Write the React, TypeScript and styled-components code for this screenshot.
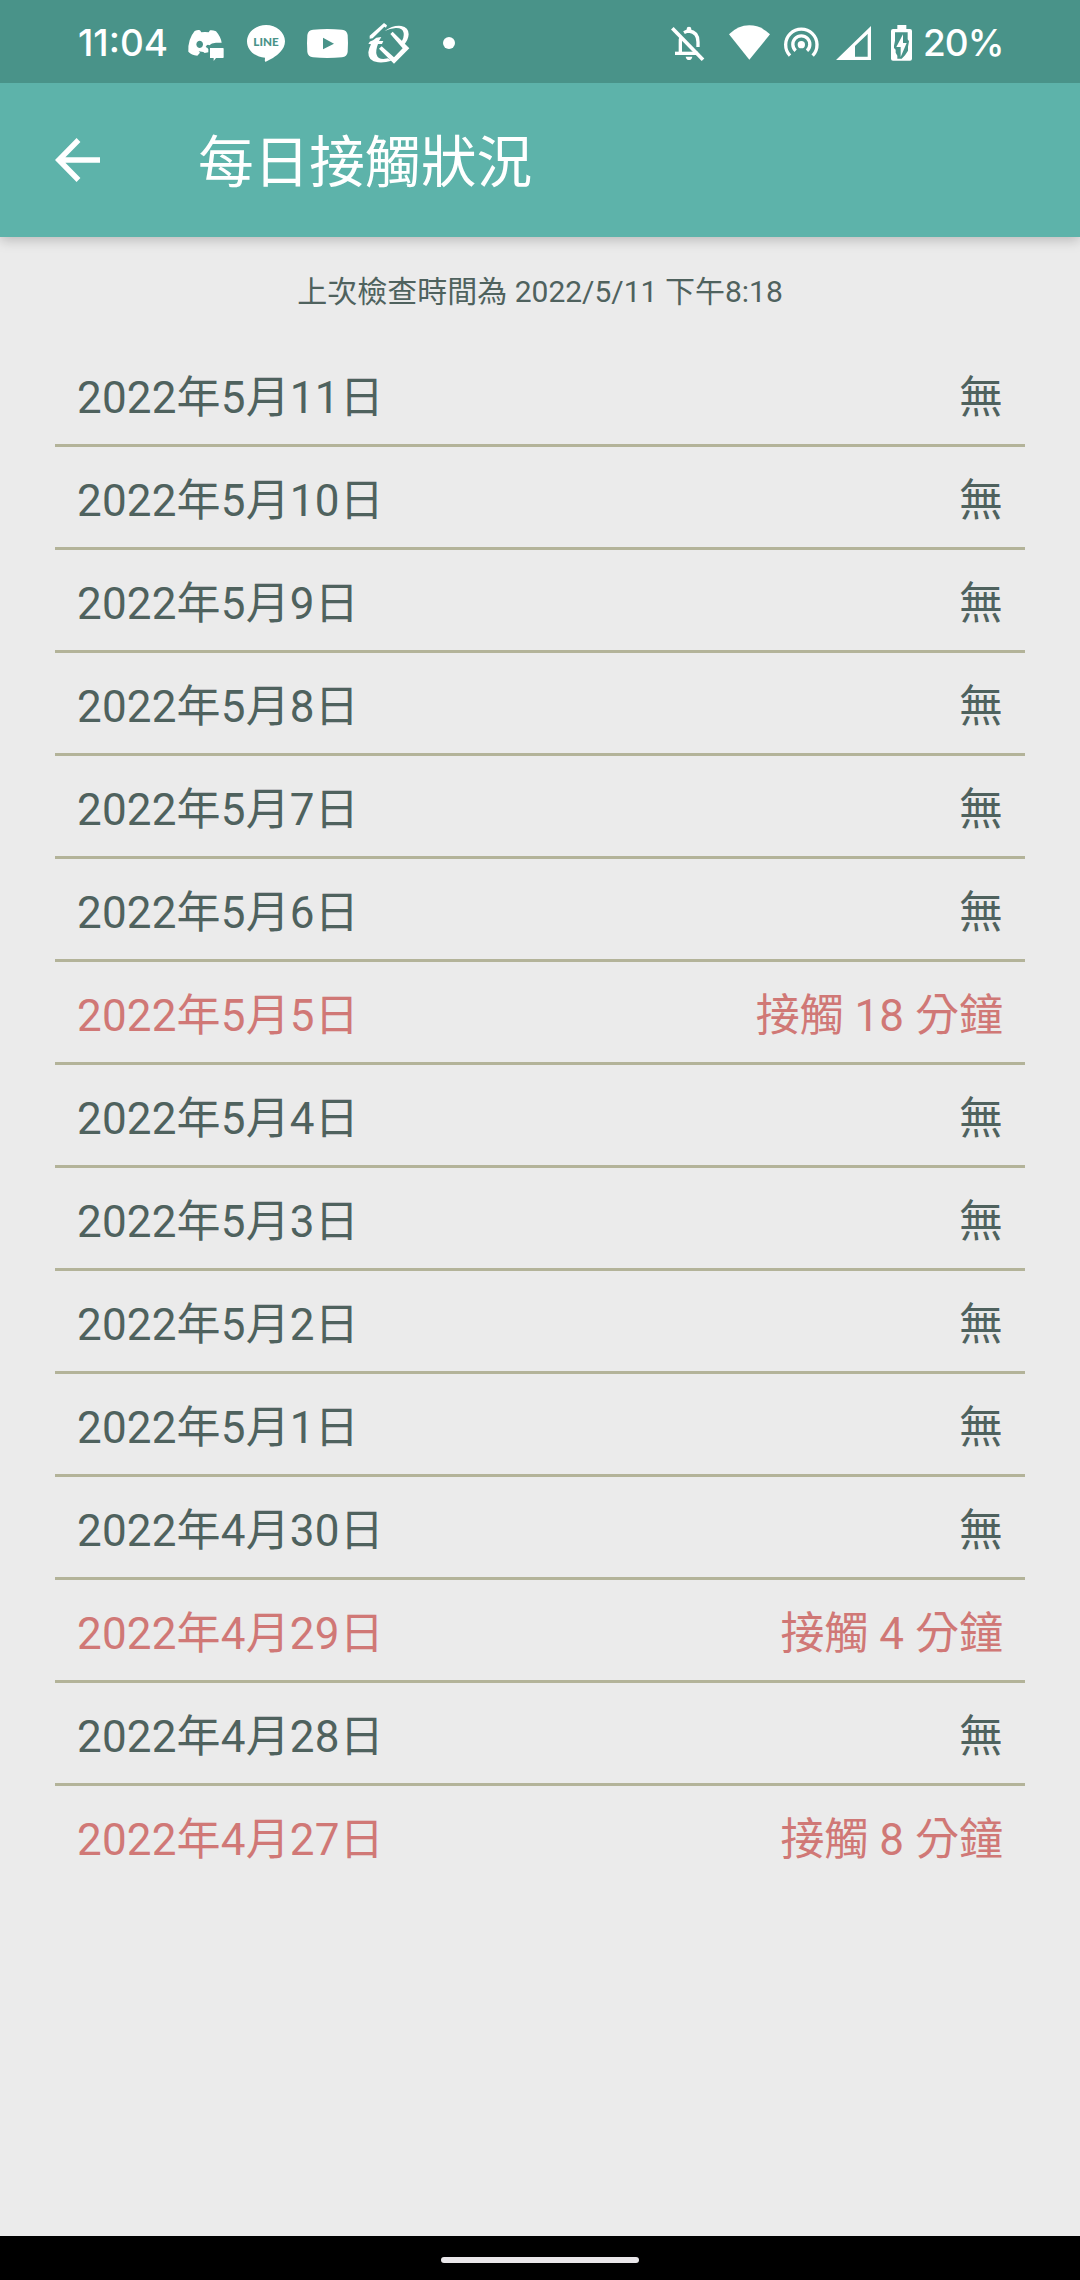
import React from "react";
import styled, { createGlobalStyle } from "styled-components";

const STATUS = "#499389";

const GlobalStyle = createGlobalStyle`
  * { box-sizing: border-box; }
  body { margin: 0; background: #ebebeb; }
`;

const Screen = styled.div`
  display: flex;
  flex-direction: column;
  width: 1080px;
  height: 2280px;
  background: #ebebeb;
  color: #4f625e;
  font-family: Roboto, "Noto Sans CJK TC", sans-serif;
  overflow: hidden;
`;

const StatusBar = styled.div`
  position: relative;
  z-index: 1;
  display: flex;
  justify-content: space-between;
  height: 83px;
  flex: none;
  padding: 0 77px 0 78px;
  background: ${STATUS};
  color: #fff;
`;

const StatusGroup = styled.div`
  display: flex;
  align-items: flex-start;
`;

const StatusText = styled.span<{ $left?: number; $width: number; $spacing?: number }>`
  width: ${(p) => p.$width}px;
  margin-left: ${(p) => p.$left ?? 0}px;
  font-family: Inter, sans-serif;
  font-size: 37px;
  font-weight: 500;
  letter-spacing: ${(p) => p.$spacing ?? 0}px;
  line-height: 46px;
  padding-top: 20px;
  white-space: nowrap;
`;

const Glyph = styled.svg<{ $left: number; $top: number }>`
  display: block;
  flex: none;
  margin-left: ${(p) => p.$left}px;
  margin-top: ${(p) => p.$top}px;
  fill: #fff;
  overflow: visible;
`;

const AppBar = styled.header`
  display: flex;
  align-items: center;
  gap: 98px;
  height: 154px;
  flex: none;
  padding-left: 55px;
  background: #5db3aa;
  color: #fff;
  box-shadow: 0 3px 12px rgba(0, 0, 0, 0.22);
`;

const BackArrow = styled.svg`
  display: block;
  width: 45px;
  height: 44px;
`;

const Title = styled.h1`
  margin: 0;
  padding-top: 6px;
  font-size: 55.7px;
  font-weight: 400;
  line-height: 80px;
`;

const LastCheck = styled.p`
  margin: 0;
  height: 107px;
  padding-top: 33px;
  font-size: 30px;
  line-height: 44px;
  text-align: center;
`;

const List = styled.ul`
  flex: 1;
  margin: 0;
  padding: 0 55px;
  list-style: none;
`;

const Row = styled.li<{ $alert: boolean }>`
  display: flex;
  align-items: center;
  justify-content: space-between;
  height: 103px;
  padding: 8px 22px 0;
  border-bottom: 3px solid #b3b399;
  font-size: 44px;
  line-height: 64px;
  color: ${(p) => (p.$alert ? "#d07876" : "inherit")};

  &:last-child {
    border-bottom-color: transparent;
  }
`;

const Day = styled.span`
  letter-spacing: 0.17px;
`;

const NavBar = styled.div`
  display: flex;
  align-items: center;
  justify-content: center;
  height: 44px;
  padding-top: 4px;
  flex: none;
  background: #000;
`;

const NavHandle = styled.div`
  width: 198px;
  height: 6px;
  border-radius: 3px;
  background: #e9e7ea;
`;

const days: [string, number][] = [
  ["2022年5月11日", 0],
  ["2022年5月10日", 0],
  ["2022年5月9日", 0],
  ["2022年5月8日", 0],
  ["2022年5月7日", 0],
  ["2022年5月6日", 0],
  ["2022年5月5日", 18],
  ["2022年5月4日", 0],
  ["2022年5月3日", 0],
  ["2022年5月2日", 0],
  ["2022年5月1日", 0],
  ["2022年4月30日", 0],
  ["2022年4月29日", 4],
  ["2022年4月28日", 0],
  ["2022年4月27日", 8],
];

// Every glyph is drawn on a grid of three units to the pixel.
const DiscordIcon = () => (
  <Glyph $left={20} $top={30} width="36" height="31" viewBox="0 0 108 93">
    <path
      fillRule="evenodd"
      d="M20 3Q30-1 36 1L40 7Q51 5 62 7L66 1Q73-1 84 4Q98 20 101 38H84Q70 39 64 46Q58 40 53 51Q60 53 61 58V67L50 69L46 66L32 64L36 68L28 77Q10 75 1 65Q-1 28 20 3ZM35 32A10 11 0 1 0 35.1 32ZM66 54H105Q107 54 107 56V82Q107 84 105 84H84L77 93V84H66Z"
    />
  </Glyph>
);

const LineIcon = () => (
  <Glyph $left={23} $top={25} width="38" height="37" viewBox="0 0 114 111">
    <path d="M57 0C88 0 114 22 114 49C114 62 108 72 99 82C88 94 68 106 56 110C52 111 54 104 54 98C22 96 0 75 0 49C0 22 26 0 57 0Z" />
    <text
      x="57"
      y="62"
      textAnchor="middle"
      textLength="76"
      lengthAdjust="spacingAndGlyphs"
      fontFamily="Lato, sans-serif"
      fontWeight="900"
      fontSize="36"
      fill={STATUS}
    >
      LINE
    </text>
  </Glyph>
);

const YouTubeIcon = () => (
  <Glyph $left={22} $top={29} width="41" height="29" viewBox="0 0 123 87">
    <path
      fillRule="evenodd"
      d="M18 2Q61-2 105 2Q120 3 122 18Q124 43 122 69Q120 84 105 85Q61 89 18 85Q3 84 1 69Q-1 43 1 18Q3 3 18 2ZM48 26V61L81 44Z"
    />
  </Glyph>
);

const OrbitIcon = () => (
  <Glyph $left={20} $top={23} width="41" height="41" viewBox="0 0 123 123">
    <path d="M5 38L48 0L57 7L54 14L49 11L14 46L5 47Z" />
    <path d="M50 24Q75 6 100 9Q122 13 122 34Q121 52 107 66L99 58Q109 44 107 30Q104 14 83 15Q66 16 50 24Z" />
    <path d="M67 33L74 26L124 76L78 122L33 77L41 70L78 103L104 76Z" />
    <path d="M40 42L33 54H46L42 63H30Q22 84 26 95Q30 108 46 108L60 106L70 113Q50 120 30 118Q0 116 1 88Q3 75 9 64L1 62Q4 55 15 52L25 44Z" />
  </Glyph>
);

const DotIcon = () => (
  <Glyph $left={34} $top={37} width="12" height="12" viewBox="0 0 36 36">
    <circle cx="18" cy="18" r="18" />
  </Glyph>
);

const BellOffIcon = () => (
  <Glyph $left={0} $top={26} width="34" height="35" viewBox="0 0 102 105">
    <g fill="none" stroke="#fff" strokeWidth="10">
      <path d="M4 7L96 101" strokeWidth="11" />
      <path d="M12 82H80" />
      <path d="M28 82V48Q27 39 31 33" />
      <path d="M39 20Q48 15 54 15Q81 18 81 48V63" />
    </g>
    <path d="M47 17V9Q47 2 54 2Q61 2 61 9V17ZM44 92H64Q62 102 54 102Q46 102 44 92Z" />
  </Glyph>
);

const WifiIcon = () => (
  <Glyph $left={24} $top={25} width="41" height="35" viewBox="0 0 123 105">
    <path d="M0 28Q27 1 61 1Q96 1 123 28L61 104Z" />
  </Glyph>
);

const HotspotIcon = () => (
  <Glyph $left={14} $top={27} width="35" height="31" viewBox="0 0 105 93">
    <circle cx="52" cy="53" r="11" />
    <g fill="none" stroke="#fff" strokeWidth="10">
      <path d="M18 86A47 47 0 1 1 86 86" />
      <path d="M35 71A25.5 25.5 0 1 1 69 71" />
    </g>
  </Glyph>
);

const SignalIcon = () => (
  <Glyph $left={17} $top={26} width="35" height="34" viewBox="0 0 105 102">
    <path fillRule="evenodd" d="M0 102L105 0V102ZM57 60V92H95V24Z" />
  </Glyph>
);

const BatteryIcon = () => (
  <Glyph $left={20} $top={25} width="21" height="36" viewBox="0 0 63 108">
    <path
      fillRule="evenodd"
      d="M19 0H46V12H57Q63 12 63 18V101Q63 107 57 107H6Q0 107 0 101V18Q0 12 6 12H19ZM12 22V47L9 62V69L14 74V83L19 92V101H32L42 91L51 77V65L54 49L50 43V22ZM36 28V54H47L29 96V66H16Z"
    />
  </Glyph>
);

export default function App() {
  return (
    <Screen>
      <GlobalStyle />
      <StatusBar>
        <StatusGroup>
          <StatusText $width={90}>11:04</StatusText>
          <DiscordIcon />
          <LineIcon />
          <YouTubeIcon />
          <OrbitIcon />
          <DotIcon />
        </StatusGroup>
        <StatusGroup>
          <BellOffIcon />
          <WifiIcon />
          <HotspotIcon />
          <SignalIcon />
          <BatteryIcon />
          <StatusText $left={11} $width={80} $spacing={-1}>20%</StatusText>
        </StatusGroup>
      </StatusBar>
      <AppBar>
        <BackArrow viewBox="0 0 45 44" fill="none" stroke="#fff" strokeWidth="5.4">
          <path d="M45 22H4M23.5 2L3.8 22L23.5 42" />
        </BackArrow>
        <Title>每日接觸狀況</Title>
      </AppBar>
      <LastCheck>上次檢查時間為 2022/5/11 下午8:18</LastCheck>
      <List>
        {days.map(([date, minutes]) => (
          <Row key={date} $alert={minutes > 0}>
            <Day>{date}</Day>
            <span>{minutes > 0 ? `接觸 ${minutes} 分鐘` : "無"}</span>
          </Row>
        ))}
      </List>
      <NavBar>
        <NavHandle />
      </NavBar>
    </Screen>
  );
}
